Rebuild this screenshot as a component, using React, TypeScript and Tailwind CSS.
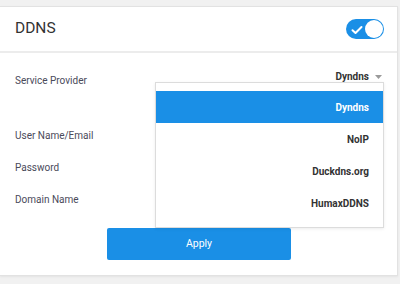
import React from "react";

export default function App() {
  const items = ["Dyndns", "NoIP", "Duckdns.org", "HumaxDDNS"];
  return (
    <div
      className="w-[400px] h-[284px] bg-[#f1f1f1] pt-[6px] pr-[2px] overflow-hidden"
      style={{ fontFamily: "Roboto, 'Liberation Sans', sans-serif" }}
    >
      <div className="relative h-[270px] bg-white border border-[#e2e2e2] border-l-0 shadow-[0_1px_2px_rgba(0,0,0,0.06)]">
        <div className="h-[46px] flex items-center justify-between pl-[15px] pr-[13px] border-b-2 border-[#ececec]">
          <span className="text-[15.5px] text-[#333]">DDNS</span>
          <div className="w-[38px] h-[20px] rounded-full bg-[#1a8fe6] relative flex items-center">
            <svg width="12" height="10" viewBox="0 0 12 10" className="ml-[5px] mt-[1px]">
              <path d="M1.5 5.2 L4.5 8 L10.5 2" stroke="white" strokeWidth="2" fill="none" strokeLinecap="round" strokeLinejoin="round" />
            </svg>
            <div className="absolute right-[1px] top-[1px] w-[18px] h-[18px] rounded-full bg-white" />
          </div>
        </div>
        <div className="pl-[15px] pr-[15px] pt-[16px]">
          <div className="h-[22px] flex items-center justify-between">
            <span className="text-[10px] text-[#4a4a5a]">Service Provider</span>
            <div className="flex items-center -mt-[8px]">
              <span className="text-[10px] font-bold text-[#333]">Dyndns</span>
              <svg width="7" height="4" viewBox="0 0 7 4" className="ml-[6px] mt-[1px]">
                <path d="M0 0 L7 0 L3.5 4 Z" fill="#9a9a9a" />
              </svg>
            </div>
          </div>
          <div className="mt-[28px] h-[32px] flex items-center">
            <span className="text-[10px] text-[#4a4a5a]">User Name/Email</span>
          </div>
          <div className="h-[32px] flex items-center">
            <span className="text-[10px] text-[#4a4a5a]">Password</span>
          </div>
          <div className="h-[32px] flex items-center">
            <span className="text-[10px] text-[#4a4a5a]">Domain Name</span>
          </div>
          <button className="block mt-[13px] ml-[92px] w-[184px] h-[32px] rounded-[2px] bg-[#1a8fe6] text-white text-[10.5px]">
            Apply
          </button>
        </div>
        <div className="absolute left-[155px] top-[75px] w-[229px] bg-white border border-[#dcdcdc] py-[8px] shadow-[0_1px_3px_rgba(0,0,0,0.08)]">
          {items.map((it, i) => (
            <div
              key={it}
              className={
                i === 0
                  ? "h-[32px] flex items-center justify-end pr-[14px] bg-[#1a8fe6] text-white text-[10px] font-bold"
                  : "h-[32px] flex items-center justify-end pr-[14px] text-[#333] text-[10px] font-bold"
              }
            >
              {it}
            </div>
          ))}
        </div>
      </div>
    </div>
  );
}
